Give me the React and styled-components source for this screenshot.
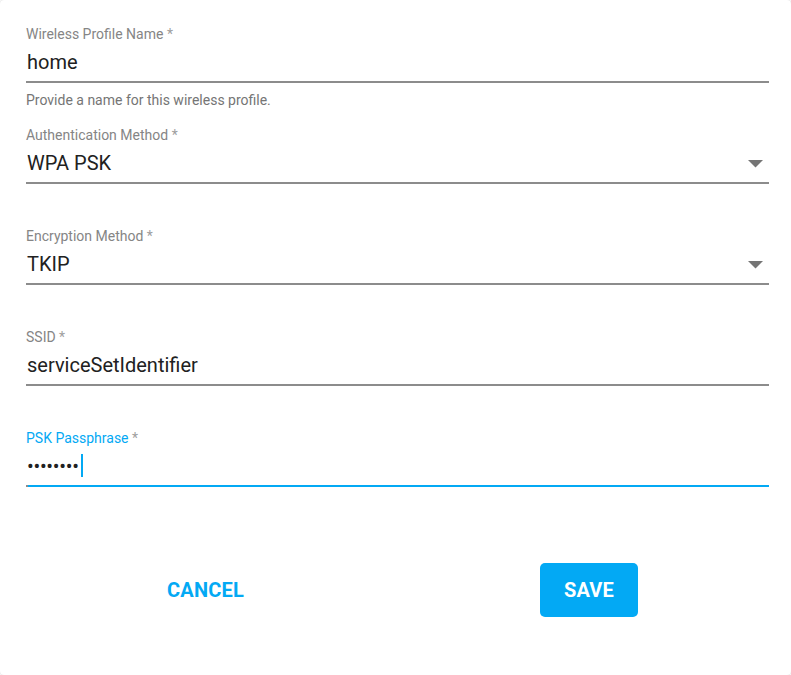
import React from "react";
import styled, { createGlobalStyle } from "styled-components";

const Global = createGlobalStyle`
  html, body { margin: 0; padding: 0; background: #fff; }
  body { font-family: Roboto, "Noto Sans", Arial, sans-serif; }
  * { box-sizing: border-box; }
`;

const Card = styled.div`
  width: 791px;
  height: 675px;
  background: #fff;
  border-radius: 4px;
  box-shadow: 0 0 2px rgba(0, 0, 0, 0.22);
  padding: 26px 22px 0 26px;
  display: flex;
  flex-direction: column;
`;

const Field = styled.div`
  display: flex;
  flex-direction: column;
  flex-shrink: 0;
`;

const Label = styled.div`
  font-size: 14px;
  line-height: 16px;
  color: ${(p) => (p.$focused ? "#03a9f4" : "#858585")};
  span { color: #9e9e9e; }
`;

const InputRow = styled.div`
  position: relative;
  margin-top: 5px;
  height: 36px;
  padding: 0 0 5px 1px;
  display: flex;
  align-items: center;
  font-size: 20px;
  line-height: 28px;
  color: #212121;
  border-bottom: 2px solid ${(p) => (p.$focused ? "#03a9f4" : "#8c8c8c")};
`;

const GrayStub = styled.div`
  position: absolute;
  left: 0;
  bottom: -2px;
  width: 2px;
  height: 2px;
  background: #8c8c8c;
`;

const Caret = styled.span`
  display: inline-block;
  width: 2px;
  height: 23px;
  background: #03a9f4;
  margin-left: 2px;
`;

const Dots = styled.span`
  letter-spacing: -0.3px;
  font-size: 20px;
`;

const Arrow = styled.svg`
  position: absolute;
  right: 6px;
  top: 12px;
`;

const Helper = styled.div`
  height: 44px;
  padding-top: 9px;
  font-size: 14px;
  line-height: 16px;
  color: #757575;
`;

const Actions = styled.div`
  margin-top: 32px;
  display: flex;
  justify-content: space-between;
  align-items: center;
  padding: 0 131px 0 125px;
`;

const Button = styled.button`
  font-family: Roboto, Arial, sans-serif;
  font-size: 20px;
  font-weight: 700;
  border: none;
  border-radius: 5px;
  height: 54px;
  cursor: pointer;
  padding: 0 ${(p) => (p.$primary ? "24px" : "16px")};
  background: ${(p) => (p.$primary ? "#03a9f4" : "transparent")};
  color: ${(p) => (p.$primary ? "#fff" : "#03a9f4")};
  letter-spacing: 0.2px;
`;

const DropArrow = () => (
  <Arrow width="15" height="8" viewBox="0 0 15 8">
    <polygon points="0,0 15,0 7.5,7.5" fill="#757575" />
  </Arrow>
);

const TextField = ({ label, value, helper, select, children, focused }) => (
  <Field>
    <Label $focused={focused}>
      {label} <span>*</span>
    </Label>
    <InputRow $focused={focused}>
      {focused && <GrayStub />}
      {children || value}
      {select && <DropArrow />}
    </InputRow>
    <Helper>{helper}</Helper>
  </Field>
);

export default function App() {
  return (
    <>
      <Global />
      <Card>
        <TextField
          label="Wireless Profile Name"
          value="home"
          helper="Provide a name for this wireless profile."
        />
        <TextField label="Authentication Method" value="WPA PSK" select />
        <TextField label="Encryption Method" value="TKIP" select />
        <TextField label="SSID" value="serviceSetIdentifier" />
        <TextField label="PSK Passphrase" focused>
          <Dots>••••••••</Dots>
          <Caret />
        </TextField>
        <Actions>
          <Button>CANCEL</Button>
          <Button $primary>SAVE</Button>
        </Actions>
      </Card>
    </>
  );
}
